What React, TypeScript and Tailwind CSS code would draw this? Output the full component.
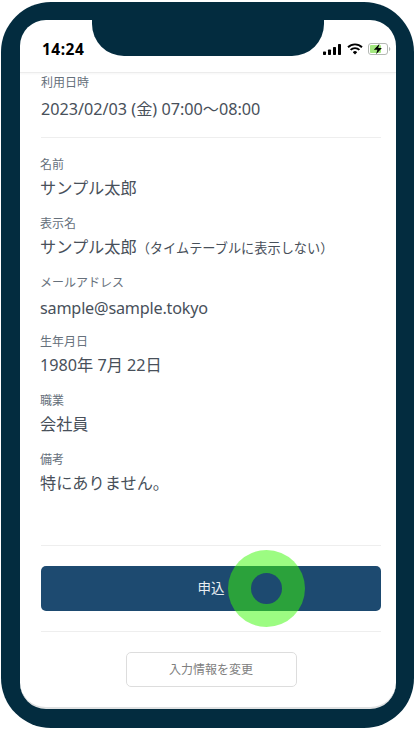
const fields = [
  { label: "名前", value: "サンプル太郎" },
  { label: "表示名", value: "サンプル太郎", note: "（タイムテーブルに表示しない）" },
  { label: "メールアドレス", value: "sample@sample.tokyo", tight: true },
  { label: "生年月日", value: "1980年 7月 22日" },
  { label: "職業", value: "会社員" },
  { label: "備考", value: "特にありません。" },
];

function Field({ label, value, note, tight }: { label: string; value: string; note?: string; tight?: boolean }) {
  return (
    <div className={`-ml-[1px] ${tight ? "mb-[13px]" : "mb-[15px]"}`}>
      <div className="h-[18px] text-[12px] leading-[18px] text-[#66707b]">{label}</div>
      <div
        className={`h-[24px] text-[16.2px] leading-[24px] whitespace-nowrap text-[#48505a] ${
          tight ? "mt-[4px] tracking-[-0.2px]" : "mt-[2px]"
        }`}
      >
        {value}
        {note && <span className="text-[13.2px]">{note}</span>}
      </div>
    </div>
  );
}

function StatusIcons() {
  return (
    <div className="flex items-center gap-[4px]">
      <svg width="18" height="11" viewBox="0 0 18 11" fill="#000">
        <rect x="0" y="7.5" width="3" height="3.5" rx="0.7" />
        <rect x="5" y="5.5" width="3" height="5.5" rx="0.7" />
        <rect x="10" y="3" width="3" height="8" rx="0.7" />
        <rect x="15" y="0" width="3" height="11" rx="0.7" />
      </svg>
      <svg width="16" height="12" viewBox="0 0 16 12" className="ml-[2px]" fill="none" stroke="#000" strokeWidth="1.9">
        <path d="M1 4.2a10 10 0 0 1 14 0" />
        <path d="M3.6 6.9a6.3 6.3 0 0 1 8.8 0" />
        <path d="M8 11.5 5.8 9.2a3.1 3.1 0 0 1 4.4 0z" fill="#000" stroke="none" />
      </svg>
      <svg width="23" height="12" viewBox="0 0 23 12" className="ml-[1px]">
        <rect x="0.5" y="0.5" width="19" height="11" rx="2.5" fill="#fff" stroke="#b4b8b4" />
        <rect x="2" y="2" width="11" height="8" rx="1" fill="#a3e87f" />
        <path d="M21 4v4c.8-.3 1.3-1.1 1.3-2s-.5-1.700-1.300-2z" fill="#b4b8b4" />
        <path d="M11.500 0.800 5.800 6.800h3.600l-1.300 4.400 5.800-6.200h-3.700z" fill="#000" />
      </svg>
    </div>
  );
}

export default function App() {
  return (
    <div
      className="relative h-[739px] w-[415px] overflow-hidden bg-white pt-[2px] pl-[1px]"
      style={{ fontFamily: '"Noto Sans", "Noto Sans CJK JP", sans-serif' }}
    >
      <div className="relative h-[726px] w-[413px] rounded-[50px] bg-[#032c3f] pt-[18px] pl-[19px]">
        {/* ノッチ */}
        <div className="absolute left-[91px] top-0 h-[54px] w-[232px] rounded-b-[32px] bg-[#032c3f]" />

        <div className="flex h-[689px] w-[376px] flex-col overflow-hidden rounded-[26px] border-b-2 border-[#dfe1e2] bg-white">
          <div className="flex h-[53px] shrink-0 items-end justify-between border-b border-[#ececec] pr-[5px] pl-[22px] pb-[13px] shadow-[0_1px_2px_rgba(0,0,0,0.04)]">
            <span className="text-[15.5px] leading-[20px] font-bold tracking-[0.5px] text-black">14:24</span>
            <div className="mb-[4px]">
              <StatusIcons />
            </div>
          </div>

          <div className="flex flex-1 flex-col pr-[15px] pl-[21px]">
            <div className="mt-[1px] h-[18px] text-[12px] leading-[18px] text-[#66707b]">利用日時</div>
            <div className="mt-[5px] h-[24px] text-[16.2px] leading-[24px] text-[#48505a]">2023/02/03 (金) 07:00〜08:00</div>
            <div className="mt-[16px] h-px bg-[#eeeeee]" />

            <div className="mt-[18px]">
              {fields.map((f) => (
                <Field key={f.label} {...f} />
              ))}
            </div>

            <div className="mt-[35px] h-px bg-[#eeeeee]" />
            <button className="mt-[20px] h-[45px] w-full rounded-[5px] bg-[#1d4a70] text-[13.5px] text-[#e8edf2]">
              申込
            </button>
            <div className="mt-[20px] h-px bg-[#eeeeee]" />
            <button className="mx-auto mt-[20px] h-[35px] w-[171px] rounded-[5px] border border-[#dddddd] bg-white text-[12px] text-[#808080]">
              入力情報を変更
            </button>
          </div>
        </div>
      </div>

      {/* タップ位置のマーカー */}
      <div className="absolute left-[228px] top-[550px] flex h-[77px] w-[77px] items-center justify-center rounded-full bg-[#39fa06]/50">
        <div className="h-[31px] w-[31px] rounded-full bg-[#1d4a70]" />
      </div>
    </div>
  );
}
